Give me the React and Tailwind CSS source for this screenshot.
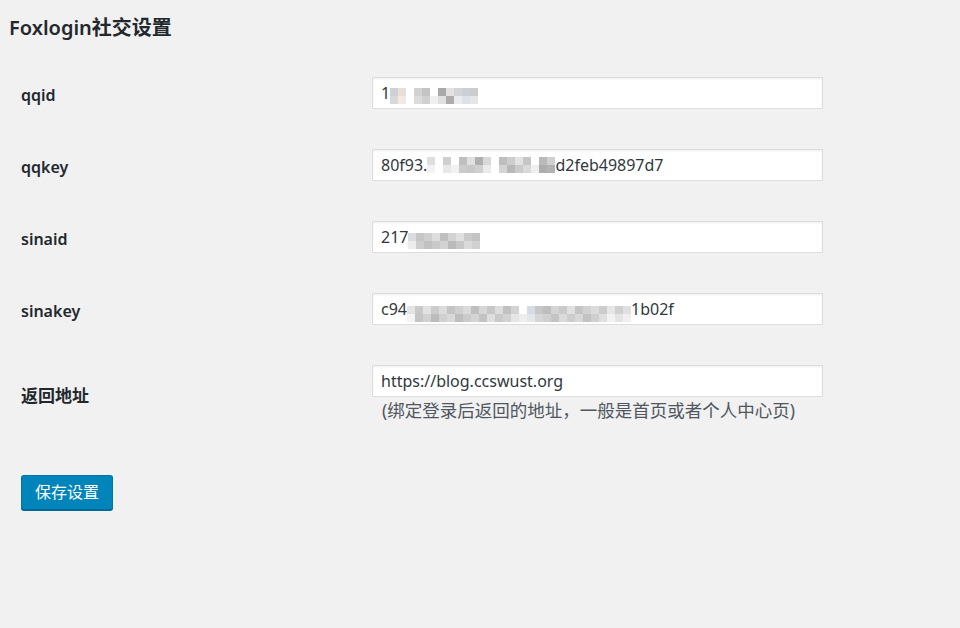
import React from "react";

const font = { fontFamily: '"Noto Sans", "Noto Sans CJK SC", sans-serif' };

function Pix({ cells, cell = 8 }) {
  return (
    <span className="inline-flex align-middle">
      {cells.map((c, i) => (
        <span key={i} className="inline-flex flex-col">
          <span className="block h-[8px]" style={{ backgroundColor: c[0], width: cell }} />
          <span className="block h-[8px]" style={{ backgroundColor: c[1], width: cell }} />
        </span>
      ))}
    </span>
  );
}

const W = "#ffffff";
const qqidPix = [
  ["#cfd0d4", "#d8d8d8"], ["#e8e0d8", "#f1eae2"], [W, W], ["#d2d2d2", "#dcdcdc"],
  ["#c4c4c4", "#d0d0d0"], [W, "#f0f0f0"], ["#a9a9a9", "#e0e0e0"], ["#e2e2e2", "#acacac"],
  ["#d4d4d4", "#ececec"], ["#cad0d6", "#dde2e8"], ["#cccccc", "#e6e6e6"],
];
const qqkeyPix = [
  ["#dedede", "#f2f2f2"], [W, W], ["#cfcfcf", "#e8e8e8"], [W, "#f2f2f2"], ["#bfbfbf", "#cbcbcb"],
  ["#e0e0e0", "#c8c8c8"], ["#afafaf", "#d0d0d0"], ["#d8d8d8", "#ebebeb"], [W, W], ["#bebebe", "#d4d4d4"],
  ["#cdcdcd", "#b8b8b8"], ["#e3e3e3", "#cbcbcb"], ["#c6c6c6", "#dadada"], [W, "#efefef"], ["#bababa", "#adadad"],
  ["#d0d0d0", "#b3b3b3"],
];
const sinaidPix = [
  ["#dcdcdc", "#ececec"], ["#c6c6c6", "#cdcdcd"], ["#cfcfcf", "#c1c1c1"], ["#dedede", "#c9c9c9"],
  ["#bfbfbf", "#d2d2d2"], ["#d4d4d4", "#bbbbbb"], ["#e0e0e0", "#c7c7c7"], ["#cbcbcb", "#dadada"],
  ["#c3c3c3", "#d0d0d0"],
];
const sinakeyPix = [
  ["#e4e4e4", "#f4f4f4"], ["#c9c9c9", "#c5c5c5"], ["#e2e2e2", "#d2d2d2"], ["#cccccc", "#bcbcbc"],
  ["#dcdcdc", "#d0d0d0"], ["#c4c4c4", "#d8d8d8"], ["#cfcfcf", "#bebebe"], ["#dadada", "#cbcbcb"],
  ["#bfbfbf", "#d4d4d4"], ["#d6d6d6", "#c3c3c3"], ["#c7c7c7", "#dedede"], ["#dddddd", "#cacaca"],
  ["#c1c1c1", "#d2d2d2"], ["#d4d4d4", "#e6e6e6"], [W, "#eeeeee"], ["#d6dbe4", "#e2e7ee"],
  ["#c7c7c7", "#d6d6d6"], ["#bebebe", "#d0d0d0"], ["#d4d4d4", "#c4c4c4"], ["#cacaca", "#dadada"],
  ["#e0e0e0", "#cdcdcd"], ["#c5c5c5", "#d8d8d8"], ["#d2d2d2", "#c2c2c2"], ["#dcdcdc", "#cfcfcf"],
  ["#cccccc", "#e0e0e0"], ["#e6e6e6", "#f2f2f2"], ["#d0d0d0", "#e4e4e4"], ["#e0e0e0", "#efefef"],
];

function Field({ children }) {
  return (
    <div className="w-[451px] h-[32px] bg-white border border-[#dddddd] shadow-[inset_0_1px_2px_rgba(0,0,0,0.07)] flex items-center pl-[8px] text-[16px] text-[#32373c] whitespace-nowrap overflow-hidden">
      {children}
    </div>
  );
}

function Row({ label, children, cjk }) {
  return (
    <div className="flex items-center py-[15px]">
      <div className={`w-[372px] pl-[21px] pt-[3px] text-[#23282d] font-semibold ${cjk ? "text-[17px]" : "text-[16px]"}`}>
        {label}
      </div>
      <div>{children}</div>
    </div>
  );
}

export default function App() {
  return (
    <div className="w-[960px] h-[628px] bg-[#f1f1f1] overflow-hidden" style={font}>
      <h1 className="pl-[9px] pt-[13px] h-[45px] text-[20px] leading-[30px] font-semibold text-[#23282d]">
        Foxlogin社交设置
      </h1>
      <div className="flex flex-col gap-[10px] mt-[17px]">
        <Row label="qqid">
          <Field>
            <span>1</span>
            <span className="mt-[2px]"><Pix cells={qqidPix} /></span>
          </Field>
        </Row>
        <Row label="qqkey">
          <Field>
            <span>80f93.</span>
            <Pix cells={qqkeyPix} />
            <span>d2feb49897d7</span>
          </Field>
        </Row>
        <Row label="sinaid">
          <Field>
            <span>217</span>
            <span className="mt-[4px]"><Pix cells={sinaidPix} /></span>
          </Field>
        </Row>
        <Row label="sinakey">
          <Field>
            <span>c94</span>
            <span className="mt-[6px]"><Pix cells={sinakeyPix} /></span>
            <span>1b02f</span>
          </Field>
        </Row>
        <Row label="返回地址" cjk>
          <div>
            <Field>https://blog.ccswust.org</Field>
            <div className="pl-[10px] text-[17.5px] leading-[26px] text-[#50575e] whitespace-nowrap">
              (绑定登录后返回的地址，一般是首页或者个人中心页)
            </div>
          </div>
        </Row>
      </div>
      <div className="pl-[21px] mt-[37px]">
        <button className="h-[35px] px-[13px] bg-[#0085ba] border border-[#0073aa] border-b-[#006799] rounded-[3px] text-white text-[16px] leading-[33px] shadow-[0_1px_0_#006799]">
          保存设置
        </button>
      </div>
    </div>
  );
}
